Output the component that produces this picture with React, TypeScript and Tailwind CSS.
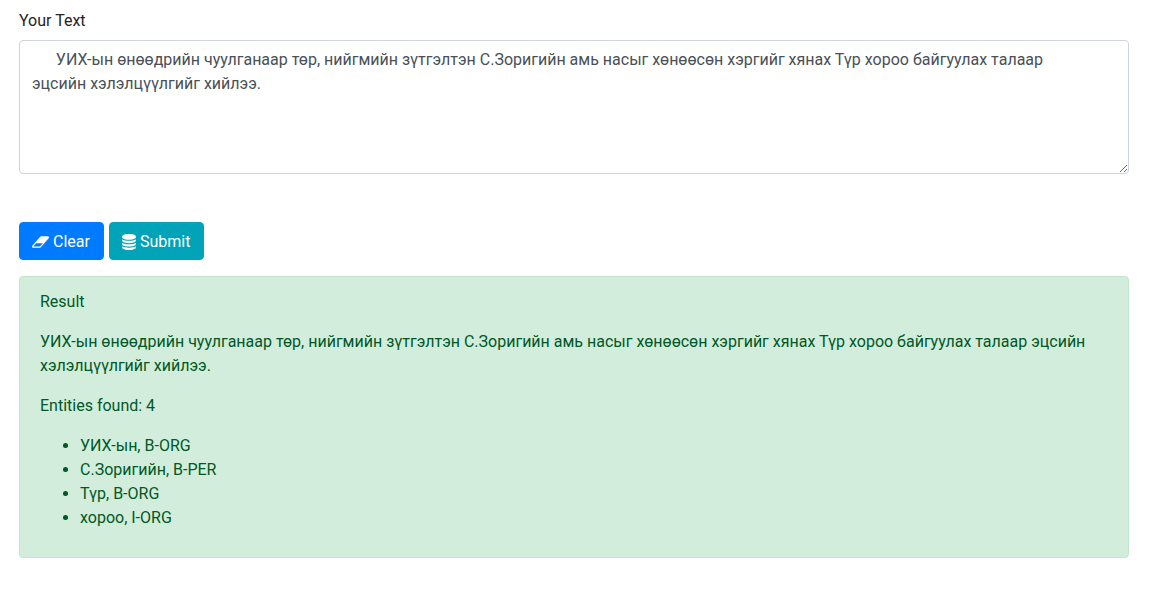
import { useState } from "react";

const SAMPLE =
  "      УИХ-ын өнөөдрийн чуулганаар төр, нийгмийн зүтгэлтэн С.Зоригийн амь насыг хөнөөсөн хэргийг хянах Түр хороо байгуулах талаар эцсийн хэлэлцүүлгийг хийлээ.";

const ENTITIES = [
  { word: "УИХ-ын", tag: "B-ORG" },
  { word: "С.Зоригийн", tag: "B-PER" },
  { word: "Түр", tag: "B-ORG" },
  { word: "хороо", tag: "I-ORG" },
];

function EraserIcon() {
  return (
    <svg viewBox="0 0 1920 1792" className="h-4 w-[17px]" fill="currentColor" aria-hidden="true">
      <path d="M896 1408l336-384h-768l-336 384h768zm1013-1077q15 34 9.500 71.500t-30.500 65.500l-896 1024q-38 44-96 44h-768q-38 0-69.500-20.500t-47.500-54.500q-15-34-9.500-71.500t30.500-65.500l896-1024q38-44 96-44h768q38 0 69.500 20.500t47.500 54.500z" />
    </svg>
  );
}

function DatabaseIcon() {
  return (
    <svg viewBox="0 0 1536 1792" className="h-4 w-[14px]" fill="currentColor" aria-hidden="true">
      <path d="M768 768q237 0 443-43t325-127v170q0 69-103 128t-280 93.500-385 34.500-385-34.500-280-93.500-103-128v-170q119 84 325 127t443 43zm0 768q237 0 443-43t325-127v170q0 69-103 128t-280 93.500-385 34.500-385-34.500-280-93.500-103-128v-170q119 84 325 127t443 43zm0-384q237 0 443-43t325-127v170q0 69-103 128t-280 93.500-385 34.500-385-34.500-280-93.500-103-128v-170q119 84 325 127t443 43zm0-1152q208 0 385 34.500t280 93.500 103 128v128q0 69-103 128t-280 93.500-385 34.500-385-34.500-280-93.500-103-128v-128q0-69 103-128t280-93.500 385-34.500z" />
    </svg>
  );
}

export default function App() {
  const [text, setText] = useState(SAMPLE);
  return (
    <main className="min-h-screen bg-white pt-[9px] pr-[46px] pb-11 pl-[19px] font-['Roboto','Liberation_Sans',sans-serif] text-[16px] leading-6 text-[#212529]">
      <form onSubmit={(e) => e.preventDefault()}>
        <label htmlFor="text" className="mb-[7px] block">
          Your Text
        </label>
        <textarea
          id="text"
          rows={5}
          value={text}
          onChange={(e) => setText(e.target.value)}
          className="block w-full resize-y rounded border border-[#ced4da] bg-white pt-[7px] pr-10 pb-[5px] pl-3 text-[#495057] outline-none"
        />
        <div className="mt-12 flex gap-[5px]">
          <button type="button" onClick={() => setText("")} className="flex items-center gap-1 rounded border border-[#007bff] bg-[#007bff] pt-[7px] pr-[13px] pb-[5px] pl-3 text-white">
            <EraserIcon />
            Clear
          </button>
          <button type="submit" className="flex items-center gap-1 rounded border border-[#00a3b7] bg-[#00a3b7] pt-[7px] pr-[13px] pb-[5px] pl-3 text-white">
            <DatabaseIcon />
            Submit
          </button>
        </div>
      </form>
      <section className="mt-4 rounded border border-[#c0e6cb] bg-[#d2eddc] px-5 pt-[13px] pb-[27px] text-[#005826]">
        <p className="mb-4">Result</p>
        <p className="mb-4">{SAMPLE.trim()}</p>
        <p className="mb-4">Entities found: 4</p>
        <ul className="list-disc pl-10">
          {ENTITIES.map((entity) => (
            <li key={entity.word}>
              {entity.word}, {entity.tag}
            </li>
          ))}
        </ul>
      </section>
    </main>
  );
}
